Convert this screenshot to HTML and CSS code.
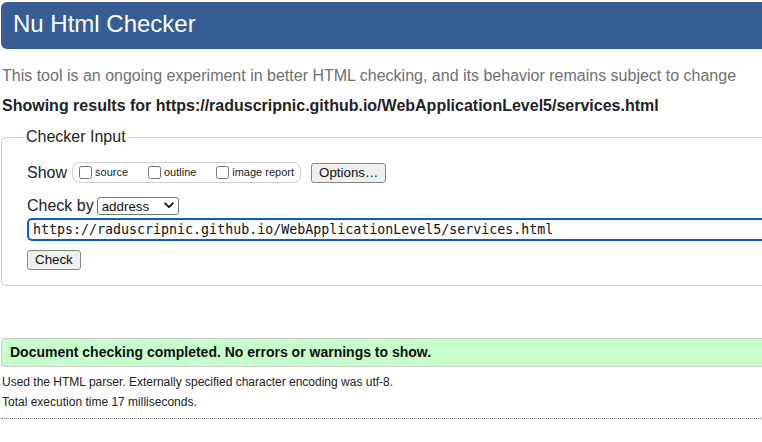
FILE: index.html
```html
<!DOCTYPE html>
<html lang="en">
<head>
<meta charset="utf-8">
<title>Nu Html Checker</title>
<link rel="stylesheet" href="styles.css">
</head>
<body>
<div class="page">
  <h1 class="title">Nu Html Checker</h1>
  <p class="intro">This tool is an ongoing experiment in better HTML checking, and its behavior remains subject to change</p>
  <p class="showing">Showing results for https://raduscripnic.github.io/WebApplicationLevel5/services.html</p>
  <fieldset class="checker">
    <legend class="checker-legend">Checker Input</legend>
    <div class="row">
      <span class="row-label">Show</span>
      <span class="pill">
        <label class="opt"><input type="checkbox" class="cb">source</label>
        <label class="opt"><input type="checkbox" class="cb">outline</label>
        <label class="opt"><input type="checkbox" class="cb">image report</label>
      </span>
      <button class="btn btn-options" type="button">Options…</button>
    </div>
    <div class="row row-checkby">
      <span class="row-label">Check by</span>
      <span class="select-wrap">
        <select class="select"><option>address</option></select>
        <svg class="chev" width="10" height="7" viewBox="0 0 10 7"><path d="M1.2 1.3 L5 5.2 L8.8 1.3" fill="none" stroke="#111" stroke-width="1.8" stroke-linecap="round" stroke-linejoin="round"/></svg>
      </span>
    </div>
    <input class="url" type="text" value="https://raduscripnic.github.io/WebApplicationLevel5/services.html">
    <div class="row-check">
      <button class="btn" type="submit">Check</button>
    </div>
  </fieldset>
  <p class="success">Document checking completed. No errors or warnings to show.</p>
  <p class="details">Used the HTML parser. Externally specified character encoding was utf-8.</p>
  <p class="details">Total execution time 17 milliseconds.</p>
  <hr class="dotted">
</div>
</body>
</html>
```
FILE: styles.css
```css
html {
  overflow: hidden;
}
body {
  margin: 0;
  font-family: "Liberation Sans", Arial, sans-serif;
  color: #222;
  background: #fff;
}
.page {
  width: 820px;
  padding: 2px 0 0 1px;
}
.title {
  margin: 0;
  background: #365d95;
  color: #fff;
  font-size: 24px;
  font-weight: normal;
  line-height: 28px;
  padding: 8px 12px 11px;
  border-radius: 6px 0 0 6px;
}
.intro {
  margin: 18px 0 0 1px;
  font-size: 16px;
  line-height: 18px;
  color: #707070;
}
.showing {
  margin: 12px 0 0 1px;
  font-size: 16px;
  line-height: 18px;
  font-weight: bold;
  color: #222;
}
.checker {
  margin: 13px 0 0 0;
  padding: 16px 0 15px 25px;
  border: 1px solid #ccc;
  border-right: none;
  border-radius: 5px 0 0 5px;
  min-width: 0;
}
.checker-legend {
  font-size: 16px;
  line-height: 18px;
  padding: 0 2px;
  margin-left: -3px;
  color: #222;
}
.row {
  display: flex;
  align-items: center;
  height: 21px;
}
.row-label {
  font-size: 16px;
  line-height: 18px;
}
.pill {
  display: inline-flex;
  align-items: center;
  height: 19px;
  margin-left: 5px;
  padding: 0 6px 0 6px;
  border: 1px solid #ccc;
  border-radius: 8px;
  width: 215px;
  justify-content: space-between;
}
.opt {
  display: inline-flex;
  align-items: center;
  font-size: 11px;
  line-height: 13px;
  color: #222;
}
.cb {
  width: 13px;
  height: 13px;
  margin: 0 3px 0 0;
}
.btn {
  font-family: "Liberation Sans", Arial, sans-serif;
  font-size: 13.33px;
  line-height: 16px;
  height: 20px;
  padding: 0 7px;
  margin: 0;
  background: #efefef;
  color: #111;
  border: 1px solid #858585;
  border-radius: 3px;
}
.btn-options {
  margin-left: 10px;
}
.row-checkby {
  margin-top: 14px;
  height: 18px;
}
.select-wrap {
  position: relative;
  display: inline-flex;
  margin-left: 3px;
}
.select {
  appearance: none;
  -webkit-appearance: none;
  width: 82px;
  height: 18px;
  margin: 0;
  padding: 0 0 0 4px;
  font-family: "Liberation Sans", Arial, sans-serif;
  font-size: 13.33px;
  color: #111;
  background: #fff;
  border: 1px solid #767676;
  border-radius: 3px;
}
.chev {
  position: absolute;
  right: 5px;
  top: 5px;
  pointer-events: none;
}
.url {
  display: block;
  box-sizing: border-box;
  width: 800px;
  height: 23px;
  margin: 3px 0 0 0;
  padding: 0 0 0 4px;
  font-family: "DejaVu Sans Mono", "Liberation Mono", monospace;
  font-size: 13.3px;
  color: #111;
  border: 2px solid #0b5fc9;
  border-right: none;
  border-radius: 5px 0 0 5px;
  outline: none;
}
.row-check {
  margin-top: 9px;
  display: flex;
}
.success {
  margin: 52px 0 0 0;
  padding: 5px 0 5px 8px;
  font-size: 14px;
  line-height: 17px;
  font-weight: bold;
  color: #111;
  background: #c6ffcb;
  border: 1px solid #ccc;
  border-right: none;
  border-radius: 4px 0 0 4px;
}
.details {
  margin: 0 0 0 1px;
  font-size: 12px;
  line-height: 20px;
  color: #222;
}
.success + .details {
  margin-top: 5px;
}
.dotted {
  margin: 6px 0 0 0;
  height: 0;
  border: none;
  border-top: 1px dotted #777;
}
```
